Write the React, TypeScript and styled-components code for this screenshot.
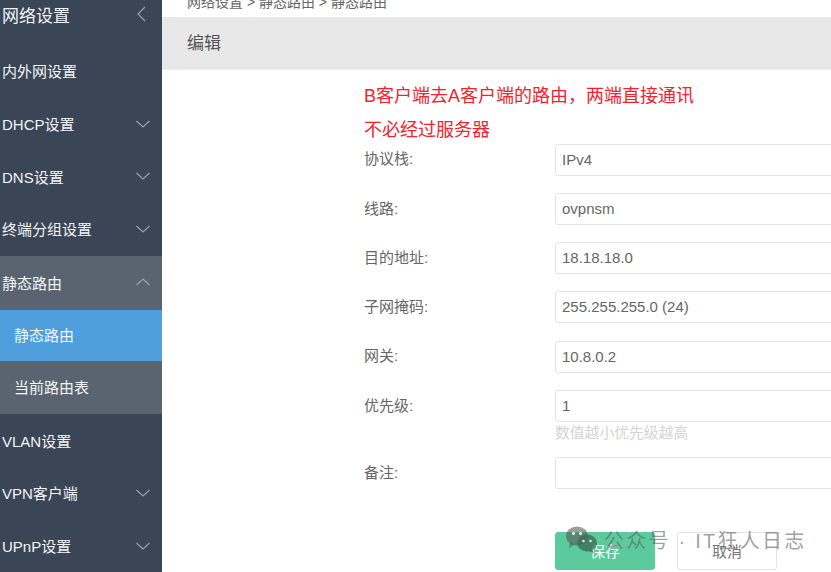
import React from "react";
import styled, { createGlobalStyle } from "styled-components";

const Global = createGlobalStyle`
  html, body { margin: 0; padding: 0; background: #fff; overflow: hidden; }
  body { font-family: "Liberation Sans", "Noto Sans CJK SC", sans-serif; }
  * { box-sizing: border-box; }
`;

const Page = styled.div`
  width: 831px;
  height: 572px;
  display: flex;
  overflow: hidden;
  position: relative;
`;

const Sidebar = styled.nav`
  width: 162px;
  flex: none;
  background: #3a4555;
  color: #f2f4f6;
  display: flex;
  flex-direction: column;
  overflow: hidden;
`;

const SideTitle = styled.div`
  height: 45px;
  padding: 0 12px 16px 2px;
  display: flex;
  align-items: center;
  justify-content: space-between;
  font-size: 17px;
`;

const SideItem = styled.div<{ $tone?: "open" | "active" | "sub"; $sub?: boolean; $h?: number }>`
  height: ${(p) => p.$h ?? 52.8}px;
  flex: none;
  padding: 0 11px ${(p) => (p.$h ? 1.5 : 0)}px ${(p) => (p.$sub ? 14 : 2)}px;
  display: flex;
  align-items: center;
  justify-content: space-between;
  font-size: 15px;
  background: ${(p) =>
    p.$tone === "active" ? "#4f9fdc" : p.$tone === "open" || p.$tone === "sub" ? "#5a6470" : "transparent"};
`;

const Chevron = styled.svg`
  width: 16px;
  height: 16px;
  fill: none;
  stroke: #9aa3ad;
  stroke-width: 1.2;
  display: block;
`;

const Main = styled.main`
  flex: 1;
  min-width: 0;
  display: flex;
  flex-direction: column;
`;

const Crumb = styled.div`
  height: 17px;
  padding-left: 25px;
  font-size: 14px;
  color: #666;
  white-space: nowrap;
  overflow: hidden;
`;

const CrumbText = styled.span`
  display: block;
  margin-top: -6px;
  line-height: 16px;
`;

const PanelHead = styled.div`
  height: 52.5px;
  flex: none;
  padding: 0 0 2px 25px;
  background: #e8e8e8;
  display: flex;
  align-items: center;
  font-size: 17px;
  color: #555;
  border-bottom: 1px solid #efefef;
`;

const Form = styled.div`
  padding: 10.5px 0 0 202px;
  display: flex;
  flex-direction: column;
`;

const Note = styled.div`
  height: 33.5px;
  font-size: 18px;
  line-height: 33px;
  color: #f5222d;
  white-space: nowrap;
`;

const Fields = styled.div`
  margin-top: -3.5px;
  display: flex;
  flex-direction: column;
`;

const Row = styled.div<{ $gap?: number }>`
  display: flex;
  align-items: center;
  height: 32px;
  margin-bottom: ${(p) => p.$gap ?? 17.3}px;
  flex: none;
  white-space: nowrap;
`;

const Label = styled.div`
  width: 191px;
  flex: none;
  font-size: 15px;
  line-height: 30px;
  height: 30px;
  margin-top: -0.5px;
  color: #666;
`;

const Field = styled.div`
  width: 300px;
  flex: none;
  height: 32px;
  padding-left: 6px;
  background: #fff;
  border: 1px solid #e4e4e4;
  border-radius: 3px;
  font-size: 15px;
  line-height: 30px;
  color: #666;
`;

const Hint = styled.div`
  margin: -15px 0 0 191px;
  height: 33px;
  font-size: 14.8px;
  line-height: 19px;
  color: #d4d4d4;
`;

const Actions = styled.div`
  margin: 42.5px 0 0 191px;
  display: flex;
  gap: 22px;
`;

const Button = styled.div<{ $primary?: boolean }>`
  width: 100px;
  height: 38px;
  border-radius: 3px;
  display: flex;
  align-items: center;
  justify-content: center;
  font-size: 15px;
  background: ${(p) => (p.$primary ? "#5bcb9d" : "#fff")};
  color: ${(p) => (p.$primary ? "#fff" : "#777")};
  border: 1px solid ${(p) => (p.$primary ? "#5bcb9d" : "#e4e4e4")};
`;

const Watermark = styled.div`
  position: absolute;
  left: 566px;
  top: 525px;
  display: flex;
  align-items: center;
  gap: 7px;
  font-size: 20px;
  letter-spacing: 2.25px;
  color: rgba(95, 95, 95, 0.6);
  white-space: nowrap;
`;

const WeChat = styled.svg`
  width: 31px;
  height: 27px;
  display: block;
`;

const Down = () => (
  <Chevron viewBox="0 0 16 16"><path d="M1.5 5 L8 11 L14.5 5" /></Chevron>
);
const Up = () => (
  <Chevron viewBox="0 0 16 16"><path d="M1.5 11 L8 5 L14.5 11" /></Chevron>
);
const Left = () => (
  <Chevron viewBox="0 0 16 16"><path d="M11 1 L4 8 L11 15" /></Chevron>
);

const fields = [
  ["协议栈:", "IPv4"],
  ["线路:", "ovpnsm"],
  ["目的地址:", "18.18.18.0"],
  ["子网掩码:", "255.255.255.0 (24)"],
  ["网关:", "10.8.0.2"],
];

export default function App() {
  return (
    <Page>
      <Global />
      <Sidebar>
        <SideTitle>网络设置<Left /></SideTitle>
        <SideItem>内外网设置</SideItem>
        <SideItem>DHCP设置<Down /></SideItem>
        <SideItem>DNS设置<Down /></SideItem>
        <SideItem $h={53.6}>终端分组设置<Down /></SideItem>
        <SideItem $tone="open" $h={53.2}>静态路由<Up /></SideItem>
        <SideItem $tone="active" $sub $h={51.4}>静态路由</SideItem>
        <SideItem $tone="sub" $sub $h={52.6}>当前路由表</SideItem>
        <SideItem>VLAN设置</SideItem>
        <SideItem>VPN客户端<Down /></SideItem>
        <SideItem>UPnP设置<Down /></SideItem>
      </Sidebar>
      <Main>
        <Crumb><CrumbText>网络设置 &gt; 静态路由 &gt; 静态路由</CrumbText></Crumb>
        <PanelHead>编辑</PanelHead>
        <Form>
          <Note>B客户端去A客户端的路由，两端直接通讯</Note>
          <Note>不必经过服务器</Note>
          <Fields>
            {fields.map(([l, v]) => (
              <Row key={l}>
                <Label>{l}</Label>
                <Field>{v}</Field>
              </Row>
            ))}
            <Row>
              <Label>优先级:</Label>
              <Field>1</Field>
            </Row>
            <Hint>数值越小优先级越高</Hint>
            <Row $gap={0}>
              <Label>备注:</Label>
              <Field />
            </Row>
          </Fields>
          <Actions>
            <Button $primary>保存</Button>
            <Button>取消</Button>
          </Actions>
        </Form>
      </Main>
      <Watermark>
        <WeChat viewBox="0 0 31 27">
          <ellipse cx="11" cy="10" rx="11" ry="9.5" fill="rgba(90,90,90,0.6)" />
          <path d="M4 16 L3 22 L9 18 Z" fill="rgba(90,90,90,0.6)" />
          <ellipse cx="21" cy="17" rx="10" ry="8.5" fill="rgba(60,110,90,0.8)" />
          <path d="M26 23 L28 27 L22 25 Z" fill="rgba(60,110,90,0.8)" />
          <circle cx="7.5" cy="7.5" r="1.4" fill="#fff" />
          <circle cx="14.5" cy="7.5" r="1.4" fill="#fff" />
          <circle cx="17.5" cy="15" r="1.2" fill="#fff" />
          <circle cx="24.5" cy="15" r="1.2" fill="#fff" />
        </WeChat>
        公众号 · IT狂人日志
      </Watermark>
    </Page>
  );
}
